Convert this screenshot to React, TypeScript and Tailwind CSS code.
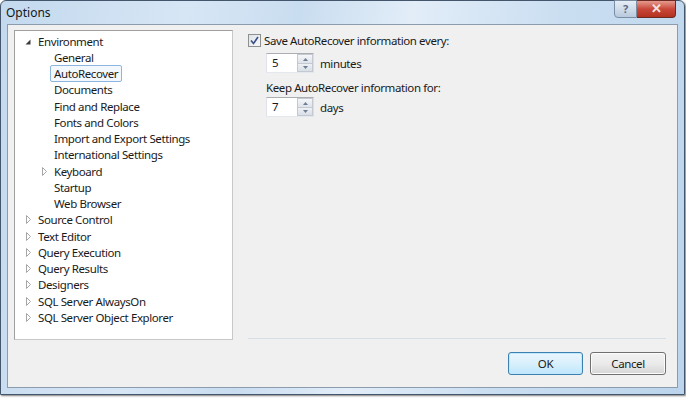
import React from 'react';

type Node = { label: string; level: 0 | 1; state?: 'open' | 'closed'; selected?: boolean };

const nodes: Node[] = [
  { label: 'Environment', level: 0, state: 'open' },
  { label: 'General', level: 1 },
  { label: 'AutoRecover', level: 1, selected: true },
  { label: 'Documents', level: 1 },
  { label: 'Find and Replace', level: 1 },
  { label: 'Fonts and Colors', level: 1 },
  { label: 'Import and Export Settings', level: 1 },
  { label: 'International Settings', level: 1 },
  { label: 'Keyboard', level: 1, state: 'closed' },
  { label: 'Startup', level: 1 },
  { label: 'Web Browser', level: 1 },
  { label: 'Source Control', level: 0, state: 'closed' },
  { label: 'Text Editor', level: 0, state: 'closed' },
  { label: 'Query Execution', level: 0, state: 'closed' },
  { label: 'Query Results', level: 0, state: 'closed' },
  { label: 'Designers', level: 0, state: 'closed' },
  { label: 'SQL Server AlwaysOn', level: 0, state: 'closed' },
  { label: 'SQL Server Object Explorer', level: 0, state: 'closed' },
];

function Expander({ state }: { state?: 'open' | 'closed' }) {
  if (!state) return <span className="w-[9px]" />;
  if (state === 'open') {
    return (
      <svg width="9" height="9" viewBox="0 0 9 9" className="shrink-0">
        <path d="M6.5 2.5 L6.5 7.5 L1.5 7.5 Z" fill="#3c3c3c" />
      </svg>
    );
  }
  return (
    <svg width="9" height="9" viewBox="0 0 9 9" className="shrink-0">
      <path d="M2.5 0.5 L6.5 4.5 L2.5 8.5 Z" fill="white" stroke="#a6a6a6" />
    </svg>
  );
}

function Spinner({ value, unit }: { value: string; unit: string }) {
  return (
    <div className="flex items-center gap-[6px]">
      <div className="flex h-[20px] w-[48px] border border-[#abadb3] border-l-[#e2e3ea] border-r-[#dbdfe6] border-b-[#e3e9ef] bg-white">
        <div className="flex-1 pl-[5px] leading-[18px]">{value}</div>
        <div className="flex w-[16px] flex-col">
          <div className="flex flex-1 items-center justify-center border border-[#c4c9d1] bg-gradient-to-b from-[#f4f6f9] to-[#dfe4ea]">
            <svg width="5" height="3" viewBox="0 0 5 3"><path d="M0 3 L2.5 0 L5 3 Z" fill="#6b7d92" /></svg>
          </div>
          <div className="flex flex-1 items-center justify-center border border-t-0 border-[#c4c9d1] bg-gradient-to-b from-[#eef1f5] to-[#d9dfe6]">
            <svg width="5" height="3" viewBox="0 0 5 3"><path d="M0 0 L2.5 3 L5 0 Z" fill="#6b7d92" /></svg>
          </div>
        </div>
      </div>
      <span>{unit}</span>
    </div>
  );
}

export default function App() {
  return (
    <div
      className="h-[398px] w-[686px] overflow-hidden bg-white text-[11.5px] tracking-[-0.4px] text-[#1a1a1a]"
      style={{ fontFamily: '"Noto Sans", "Open Sans", sans-serif' }}
    >
      <div className="flex h-[395px] w-[685px] flex-col rounded-t-[6px] border border-[#43566b] bg-[linear-gradient(100deg,#c3d9ee_0%,#d7e6f5_25%,#c9ddf0_40%,#e2edf8_55%,#cadef1_75%,#bcd5ec_100%)] shadow-[1px_1px_2px_rgba(0,0,0,0.5)]">
        <div className="relative flex h-[23px] items-center pl-[5px]">
          <span className="text-[12px] tracking-normal text-[#101820]">Options</span>
          <div className="absolute right-[8px] top-[-1px] flex">
            <div className="flex h-[18px] w-[23px] items-center justify-center rounded-bl-[4px] border border-[#7b8da3] bg-gradient-to-b from-[#e6eef6] to-[#b9cadd] text-[11px] font-bold text-[#5a6d84]">
              ?
            </div>
            <div className="flex h-[18px] w-[39px] items-center justify-center rounded-br-[4px] border border-l-0 border-[#6d2a22] bg-gradient-to-b from-[#e49a8e] via-[#c8473a] to-[#b3321f] text-[13px] font-bold text-[#f4e4e0]">
              ✕
            </div>
          </div>
        </div>
        <div className="mx-[6px] mb-[6px] flex flex-1 border border-[#8d9cac] bg-[#f0f0f0] pl-[6px] pr-[11px] pt-[5px]">
          <div className="h-[310px] w-[219px] shrink-0 border border-[#a0a0a0] border-r-[#c8c8c8] border-b-[#c8c8c8] bg-white pt-[2px]">
            {nodes.map((n) => (
              <div
                key={n.label}
                className={`flex h-[16.25px] items-center ${n.level === 0 ? 'pl-[9px]' : 'pl-[25px]'}`}
              >
                <Expander state={n.state} />
                <span
                  className={`ml-[1px] whitespace-nowrap px-[3px] leading-[15px] ${
                    n.selected ? 'rounded-[2px] border border-[#8eb4e0] bg-[#f3f8fd]' : 'border border-transparent'
                  }`}
                >
                  {n.label}
                </span>
              </div>
            ))}
          </div>
          <div className="ml-[15px] flex flex-1 flex-col">
            <div className="flex items-center gap-[3px] pt-[2px]">
              <div className="flex h-[13px] w-[13px] items-center justify-center border border-[#8e8f8f] bg-gradient-to-br from-[#dfe3e8] to-[#f7f8f9]">
                <svg width="9" height="9" viewBox="0 0 9 9">
                  <path d="M1 4.5 L3.5 7.5 L8 1" fill="none" stroke="#3a4f86" strokeWidth="1.6" />
                </svg>
              </div>
              <span>Save AutoRecover information every:</span>
            </div>
            <div className="ml-[18px] mt-[4px]">
              <Spinner value="5" unit="minutes" />
            </div>
            <div className="ml-[18px] mt-[7px] leading-[15px]">Keep AutoRecover information for:</div>
            <div className="ml-[18px] mt-[2px]">
              <Spinner value="7" unit="days" />
            </div>
            <div className="flex-1" />
            <div className="border-t border-[#d5dfe5]" />
            <div className="mb-[12px] mt-[13px] flex justify-end gap-[7px]">
              <button className="h-[23px] w-[75px] rounded-[3px] border border-[#3c7fb1] bg-gradient-to-b from-[#eaf6fd] via-[#d9f0fc] to-[#bee6fd] shadow-[inset_0_0_0_1px_#bfe8fb]">
                OK
              </button>
              <button className="h-[23px] w-[76px] rounded-[3px] border border-[#707070] bg-gradient-to-b from-[#f2f2f2] via-[#ebebeb] to-[#d5d5d5] shadow-[inset_0_0_0_1px_#fcfcfc]">
                Cancel
              </button>
            </div>
          </div>
        </div>
      </div>
    </div>
  );
}
